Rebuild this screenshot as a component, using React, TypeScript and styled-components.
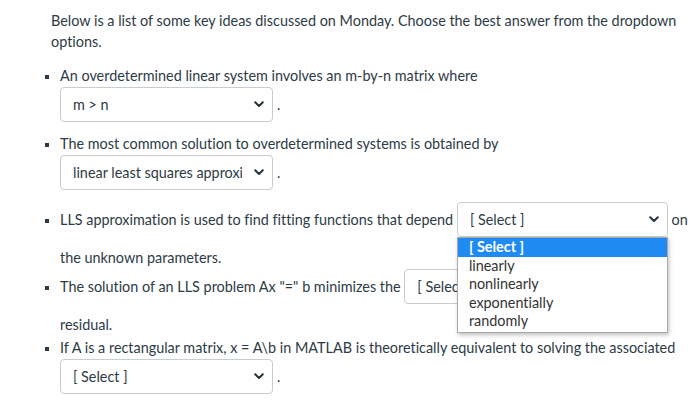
import React from "react";
import styled, { createGlobalStyle } from "styled-components";

const Global = createGlobalStyle`
  html, body { margin: 0; padding: 0; background: #ffffff; }
  body { font-family: Lato, "Open Sans", sans-serif; }
`;

const Page = styled.div`
  width: 700px;
  height: 420px;
  box-sizing: border-box;
  padding: 10px 6px 0 51px;
  color: #2d3b45;
  font-size: 14.4px;
  line-height: 21px;
  font-variant-ligatures: none;
  overflow: hidden;
`;

const Intro = styled.p`
  margin: 0 0 12.5px;
`;

const List = styled.ul`
  margin: 0;
  padding: 0 0 0 9px;
  list-style: square;
`;

const Item = styled.li<{ $gap?: number }>`
  margin-top: ${(p) => p.$gap ?? 0}px;
  &::marker { font-size: 12px; }
`;

const Line = styled.div<{ $shift?: number }>`
  display: flex;
  align-items: baseline;
  white-space: pre;
  margin-top: ${(p) => p.$shift ?? 0}px;
`;

const SelectWrap = styled.span`
  position: relative;
  display: inline-flex;
  margin: 1.5px 0 10.5px;
`;

const SelectBox = styled.span<{ $w: number }>`
  display: inline-flex;
  align-items: center;
  box-sizing: border-box;
  width: ${(p) => p.$w}px;
  height: 35px;
  padding: 0 8px 0 12px;
  border: 1px solid #c7cdd1;
  border-radius: 4px;
  background: #ffffff;
  color: #2d3b45;
  white-space: nowrap;
  overflow: hidden;
`;

const SelectText = styled.span`
  flex: 1;
  min-width: 0;
  overflow: hidden;
  text-overflow: clip;
`;

const Chevron = styled.svg`
  flex: none;
  width: 10px;
  height: 7px;
  margin-left: 12px;
`;

const Trail = styled.span`
  margin-left: 4px;
`;

const Menu = styled.div`
  position: absolute;
  left: 0;
  top: 35px;
  width: 211px;
  box-sizing: border-box;
  background: #ffffff;
  border: 1px solid #a9a9a9;
  box-shadow: 1px 2px 4px rgba(0, 0, 0, 0.25);
  padding: 0 0 1px;
  z-index: 5;
  line-height: 18px;
`;

const Option = styled.div<{ $active?: boolean }>`
  height: 18.6px;
  padding-left: 11px;
  color: ${(p) => (p.$active ? "#ffffff" : "#333333")};
  background: ${(p) => (p.$active ? "#1f8bf2" : "transparent")};
  font-weight: ${(p) => (p.$active ? 700 : 400)};
`;

const ChevronIcon = () => (
  <Chevron viewBox="0 0 10 7">
    <path d="M1.2 1.3 L5 5 L8.8 1.3" fill="none" stroke="#25323b" strokeWidth="2" strokeLinecap="round" strokeLinejoin="round" />
  </Chevron>
);

const Select = ({ value, width = 213, children }: { value: string; width?: number; children?: React.ReactNode }) => (
  <SelectWrap>
    <SelectBox $w={width}>
      <SelectText>{value}</SelectText>
      <ChevronIcon />
    </SelectBox>
    {children}
  </SelectWrap>
);

export default function App() {
  return (
    <>
      <Global />
      <Page>
        <Intro>
          Below is a list of some key ideas discussed on Monday. Choose the best answer from the dropdown options.
        </Intro>
        <List>
          <Item>
            <Line>An overdetermined linear system involves an m-by-n matrix where</Line>
            <Line>
              <Select value="m > n" />
              <Trail>.</Trail>
            </Line>
          </Item>
          <Item>
            <Line>The most common solution to overdetermined systems is obtained by</Line>
            <Line>
              <Select value="linear least squares approximation" />
              <Trail>.</Trail>
            </Line>
          </Item>
          <Item>
            <Line>
              <span>LLS approximation is used to find fitting functions that depend </span>
              <Select value="[ Select ]" width={211}>
                <Menu>
                  <Option $active>[ Select ]</Option>
                  <Option>linearly</Option>
                  <Option>nonlinearly</Option>
                  <Option>exponentially</Option>
                  <Option>randomly</Option>
                </Menu>
              </Select>
              <span> on</span>
            </Line>
            <Line $shift={-1}>the unknown parameters.</Line>
          </Item>
          <Item>
            <Line>
              <span>The solution of an LLS problem Ax "=" b minimizes the </span>
              <Select value="[ Select ]" width={213} />
            </Line>
            <Line $shift={-1}>residual.</Line>
          </Item>
          <Item $gap={2}>
            <Line>If A is a rectangular matrix, x = A\b in MATLAB is theoretically equivalent to solving the associated</Line>
            <Line>
              <Select value="[ Select ]" />
              <Trail>.</Trail>
            </Line>
          </Item>
        </List>
      </Page>
    </>
  );
}
